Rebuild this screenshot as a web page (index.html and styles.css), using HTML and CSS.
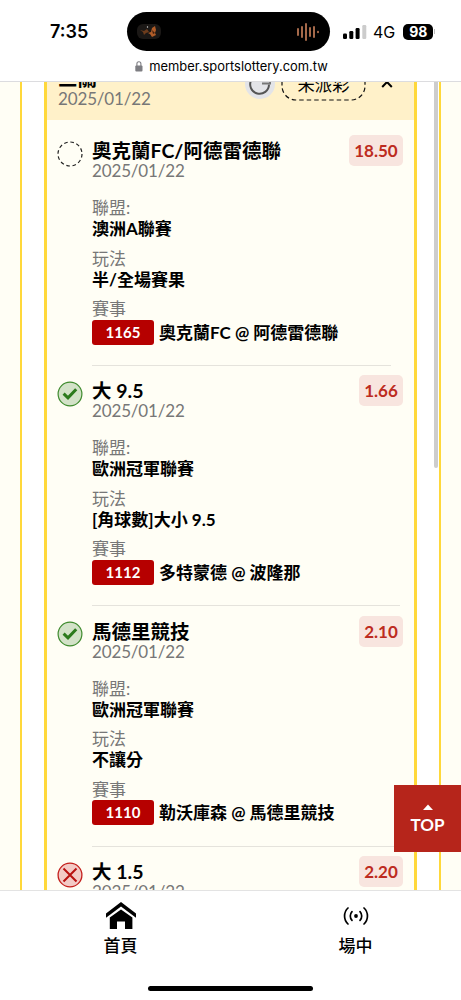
FILE: index.html
```html
<!DOCTYPE html>
<html lang="zh-Hant">
<head>
	<meta charset="utf-8">
	<meta name="viewport" content="width=device-width, initial-scale=1.0">
	<title>member.sportslottery.com.tw</title>
	<link rel="stylesheet" href="styles.css">
</head>

<body>
	<div class="browser">
		<div class="status">
			<div class="time">7:35</div>
			<div class="island">
				<svg class="cover" width="24" height="15" viewBox="0 0 24 15">
					<rect width="24" height="15" rx="6" fill="#1b1816"/>
					<path d="M3 6l4 1 3-2 2 3-3 1-2 2-1-3z" fill="#6d3c1c"/>
					<path d="M11 9l3-1 1-4 3-2 1 4-1 3 1 2-4 2-2-3z" fill="#b05c28"/>
					<path d="M15 6l3 3-2 1z" fill="#40200f"/>
					<circle cx="10.500" cy="3" r="0.7" fill="#ddd"/>
				</svg>
				<svg class="wave" width="24" height="20" viewBox="0 0 24 20" stroke="#a5694a" stroke-width="2" stroke-linecap="round">
					<path d="M2 7v6M6 5v10M10 2v16M14 6v8M18 5v10M22 9.8v.4"/>
				</svg>
			</div>
			<div class="signal">
				<svg width="24" height="16" viewBox="0 0 24 16">
					<rect x="0" y="9.5" width="4" height="5.5" rx="1.2"/>
					<rect x="6.3" y="7" width="4" height="8" rx="1.2"/>
					<rect x="12.6" y="4" width="4" height="11" rx="1.2"/>
					<rect x="19.3" y="1" width="4" height="14" rx="1.2" fill="#ccc"/>
				</svg>
				<span class="net">4G</span>
				<span class="battery">98</span><i class="cap"></i>
			</div>
		</div>
		<div class="address">
			<svg width="8" height="11" viewBox="0 0 8 11">
				<rect x="0.3" y="4.5" width="7.2" height="6" rx="1" fill="#7d7d82"/>
				<path d="M1.9 5V2.8a2 2 0 0 1 4 0V5" fill="none" stroke="#7d7d82" stroke-width="1.1"/>
			</svg>
			<span>member.sportslottery.com.tw</span>
		</div>
	</div>

	<div class="page">
		<div class="edge left"></div>
		<div class="card">
			<div class="card-head">
				<div>
					<div class="title">三關</div>
					<div class="date">2025/01/22</div>
				</div>
				<div class="head-tools">
					<svg width="30" height="30" viewBox="0 0 30 30">
						<circle cx="15" cy="15" r="15" fill="#e3e4e8"/>
						<path d="M24 15.5a9.4 9.4 0 1 1-3-7" fill="none" stroke="#555" stroke-width="2"/>
						<path d="M17 14.6h8V8" fill="none" stroke="#777" stroke-width="2"/>
					</svg>
					<div class="unpaid">
						<svg width="85" height="34"><rect x="1" y="1" width="83" height="32" rx="14"/></svg>
						<span>未派彩</span>
					</div>
					<svg class="chevron" width="12" height="8" viewBox="0 0 12 8"><path d="M1.2 7L6 2l4.8 5" fill="none" stroke="#000" stroke-width="2"/></svg>
				</div>
			</div>

			<div class="legs">
				<div class="leg first">
					<svg class="state" width="26" height="26" viewBox="0 0 26 26"><circle cx="13" cy="13" r="12" fill="none" stroke="#222" stroke-width="1.2" stroke-dasharray="3.6 2.68"/></svg>
					<div class="info">
						<div class="title">奧克蘭FC/阿德雷德聯</div>
						<div class="date">2025/01/22</div>
						<div class="group"><p>聯盟:</p><b>澳洲A聯賽</b></div>
						<div class="group"><p>玩法</p><b>半/全場賽果</b></div>
						<div class="group"><p>賽事</p><div class="match"><span class="code">1165</span><b>奧克蘭FC @ 阿德雷德聯</b></div></div>
					</div>
					<div class="odds">18.50</div>
				</div>
				<div class="leg">
					<svg class="state" width="26" height="26" viewBox="0 0 26 26"><circle cx="13" cy="13" r="11.9" fill="#d3e2c8" stroke="#3f8b2e" stroke-width="1.2"/><path d="M6.6 12.6l4.4 4.3 8.2-8.600" fill="none" stroke="#2c7a1c" stroke-width="3"/></svg>
					<div class="info">
						<div class="title">大 9.5</div>
						<div class="date">2025/01/22</div>
						<div class="group"><p>聯盟:</p><b>歐洲冠軍聯賽</b></div>
						<div class="group"><p>玩法</p><b>[角球數]大小 9.5</b></div>
						<div class="group"><p>賽事</p><div class="match"><span class="code">1112</span><b>多特蒙德 @ 波隆那</b></div></div>
					</div>
					<div class="odds">1.66</div>
				</div>
				<div class="leg">
					<svg class="state" width="26" height="26" viewBox="0 0 26 26"><circle cx="13" cy="13" r="11.9" fill="#d3e2c8" stroke="#3f8b2e" stroke-width="1.2"/><path d="M6.6 12.6l4.4 4.3 8.2-8.600" fill="none" stroke="#2c7a1c" stroke-width="3"/></svg>
					<div class="info">
						<div class="title">馬德里競技</div>
						<div class="date">2025/01/22</div>
						<div class="group"><p>聯盟:</p><b>歐洲冠軍聯賽</b></div>
						<div class="group"><p>玩法</p><b>不讓分</b></div>
						<div class="group"><p>賽事</p><div class="match"><span class="code">1110</span><b>勒沃庫森 @ 馬德里競技</b></div></div>
					</div>
					<div class="odds">2.10</div>
				</div>
				<div class="leg">
					<svg class="state" width="26" height="26" viewBox="0 0 26 26"><circle cx="13" cy="13" r="11.9" fill="#f3cbc6" stroke="#c4201c" stroke-width="1.3"/><path d="M6.5 6.5l13 13M19.5 6.5l-13 13" stroke="#b8110f" stroke-width="2"/></svg>
					<div class="info">
						<div class="title">大 1.5</div>
						<div class="date">2025/01/22</div>
					</div>
					<div class="odds">2.20</div>
				</div>
			</div>
		</div>
		<div class="gutter"><div class="scrollbar"></div></div>
		<div class="edge right"></div>
	</div>

	<div class="totop">
		<svg width="10" height="6" viewBox="0 0 10 6"><path d="M0 6l5-5.5L10 6z" fill="#fff"/></svg>
		<span>TOP</span>
	</div>

	<div class="tabs">
		<div class="tab">
			<svg width="30" height="28" viewBox="0 0 30 28">
				<path d="M0 11.6L15 0l15 11.600v4.100L15 4.600 0 15.700z"/>
				<path d="M3.800 15.600L15 7.400l11.400 8.200V27H19v-7.600h-8V27H3.800z"/>
			</svg>
			<span>首頁</span>
		</div>
		<div class="tab">
			<svg width="30" height="28" viewBox="0 0 30 28" fill="none" stroke="#000" stroke-width="1.7" stroke-linecap="round">
				<circle cx="15" cy="14" r="1.9" fill="#000" stroke="none"/>
				<path d="M11 9.600a6.500 6.500 0 0 0 0 8.800M19 9.600a6.500 6.500 0 0 1 0 8.800M7 6a11 11 0 0 0 0 16M23 6a11 11 0 0 1 0 16"/>
			</svg>
			<span>場中</span>
		</div>
	</div>
	<div class="homebar"></div>
</body>
</html>
```
FILE: styles.css
```css
body {
	margin: 0;
	height: 1000px;
	display: flex;
	flex-direction: column;
	overflow: hidden;
	background: #fff;
	color: #000;
	font: 17px/21px Lato, "Noto Sans CJK TC", sans-serif;
}
p {
	margin: 0;
	color: #777;
}
svg {
	display: block;
	flex: none;
}

/* status bar + address */
.browser {
	height: 81px;
	flex: none;
	border-bottom: 1px solid #dcdcdf;
	font-family: Inter, sans-serif;
}
.status {
	display: flex;
	align-items: center;
	padding-top: 12px;
	height: 39px;
}
.time {
	width: 77px;
	padding-left: 50px;
	font-size: 18px;
	font-weight: 600;
}
.island {
	display: flex;
	align-items: center;
	justify-content: space-between;
	box-sizing: border-box;
	width: 203px;
	height: 39px;
	padding: 0 10px;
	border-radius: 20px;
	background: #000;
}
.signal {
	display: flex;
	align-items: center;
	margin-left: 13px;
}
.net {
	margin: 2px 8px 0 6px;
	font-size: 16px;
}
.battery {
	width: 30px;
	height: 16px;
	border-radius: 5px;
	background: #000;
	color: #fff;
	font-size: 14px;
	font-weight: 700;
	line-height: 16px;
	text-align: center;
}
.cap {
	width: 1px;
	height: 5px;
	margin-left: 1px;
	background: #bbb;
}
.address {
	display: flex;
	align-items: center;
	justify-content: center;
	gap: 6px;
	height: 30px;
	padding-left: 2px;
	font-size: 12.900px;
}

/* bet slip */
.page {
	display: flex;
	height: 808px;
	flex: none;
	overflow: hidden;
}
.edge {
	box-sizing: border-box;
	width: 22px;
	background: #fffef5;
}
.left {
	border-right: 2px solid #ffd83a;
	margin-right: 22px;
}
.right {
	border-left: 2px solid #ffd83a;
}
.card {
	box-sizing: border-box;
	width: 373px;
	border: solid #ffd83a;
	border-width: 0 3px;
	background: #fffef5;
}
.gutter {
	width: 22px;
}
.scrollbar {
	width: 4px;
	height: 386px;
	margin-left: 17px;
	background: #cdcdcd;
	border-radius: 0 0 2px 2px;
}
.card-head {
	display: flex;
	justify-content: space-between;
	height: 38px;
	padding: 0 21px 0 11px;
	background: #fff1c9;
}
.card-head > div {
	margin-top: -13px;
}
.head-tools {
	display: flex;
	align-items: flex-start;
}
.unpaid {
	display: grid;
	margin: -2px 15px 0 6px;
}
.unpaid svg, .unpaid span {
	grid-area: 1 / 1;
}
.unpaid rect {
	fill: none;
	stroke: #111;
	stroke-width: 1.2;
	stroke-dasharray: 4.500 3;
}
.unpaid span {
	font-size: 17.300px;
	line-height: 36px;
	text-align: center;
}
.chevron {
	margin-top: 11px;
}
.title {
	font-size: 19.500px;
	font-weight: 700;
	line-height: 20px;
	white-space: nowrap;
}
.date {
	color: #777;
	font-size: 17px;
	line-height: 20px;
	letter-spacing: -0.15px;
}
.legs {
	padding-top: 5.600px;
}
.leg {
	display: flex;
	align-items: flex-start;
	height: 240.400px;
	padding: 0 11px 0 10px;
}
.state {
	margin-top: 15px;
}
.info {
	flex: 1;
	box-sizing: border-box;
	height: 240.400px;
	margin: 0 -41px 0 9px;
	padding-top: 15.500px;
	border-bottom: 1px solid #e5e3dc;
}
.first .info {
	margin-right: -42px;
}
.group {
	height: 42.500px;
	margin-bottom: 8px;
}
.date + .group {
	margin-top: 16px;
}
.match {
	display: flex;
	align-items: center;
	gap: 5px;
	padding-top: 0.5px;
}
.code {
	width: 62px;
	height: 25px;
	border-radius: 3px;
	background: #b60000;
	color: #fff;
	font-size: 15px;
	font-weight: 700;
	line-height: 25px;
	text-align: center;
}
.odds {
	box-sizing: border-box;
	width: 44px;
	margin-top: 9.500px;
	border-radius: 5px;
	background: #f8e5df;
	color: #bd2b20;
	font-size: 17px;
	font-weight: 700;
	line-height: 31px;
	text-align: center;
}
.first .odds {
	width: 54px;
}

.totop {
	position: absolute;
	right: 0;
	top: 785px;
	width: 67px;
	height: 67px;
	background: #b6251b;
	color: #fff;
	font-size: 17px;
	font-weight: 700;
	text-align: center;
}
.totop svg {
	margin: 19px auto 4px;
}

/* bottom tabs */
.tabs {
	display: flex;
	height: 110px;
	flex: none;
	box-sizing: border-box;
	border-top: 1px solid #e3e3e3;
	padding: 11px 0 0 3px;
}
.tab {
	width: 235px;
	flex: none;
	display: flex;
	flex-direction: column;
	align-items: center;
	gap: 5px;
	font-weight: 500;
}
.tab + .tab {
	width: 235px;
}
.homebar {
	position: absolute;
	left: 148px;
	top: 986px;
	width: 165px;
	height: 5px;
	border-radius: 3px;
	background: #000;
}
```
